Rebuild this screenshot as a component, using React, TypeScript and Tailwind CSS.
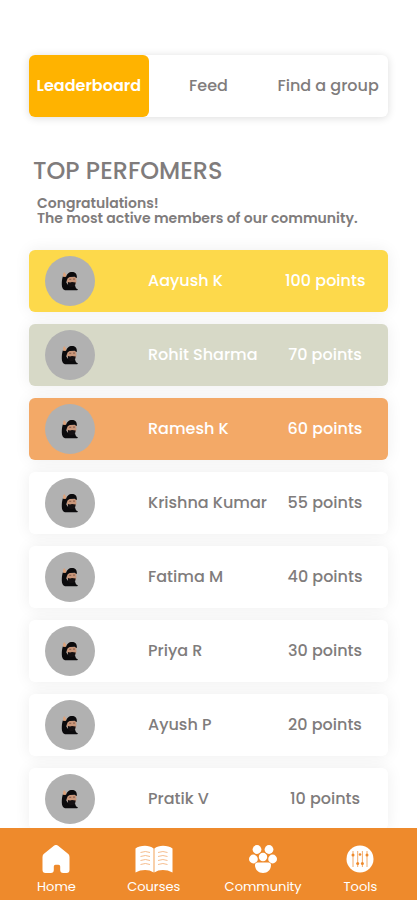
import { useState, type ReactNode } from "react";

type Performer = {
  name: string;
  points: number;
};

const PERFORMERS: Performer[] = [
  { name: "Aayush K", points: 100 },
  { name: "Rohit Sharma", points: 70 },
  { name: "Ramesh K", points: 60 },
  { name: "Krishna Kumar", points: 55 },
  { name: "Fatima M", points: 40 },
  { name: "Priya R", points: 30 },
  { name: "Ayush P", points: 20 },
  { name: "Pratik V", points: 10 },
];

// Gold, silver and bronze, everyone else gets a plain card
const PODIUM_STYLES = [
  "bg-[#fdd94b] text-white",
  "bg-[#d7d9c7] text-white",
  "bg-[#f3a967] text-white",
];

const TABS = ["Leaderboard", "Feed", "Find a group"];

function Avatar() {
  return (
    <span className="flex size-[50px] shrink-0 items-center justify-center rounded-full bg-[#b1b1b1]">
      <svg viewBox="0 0 18 20" className="h-5 w-[18px]" aria-hidden="true">
        {/* body and raised arm */}
        <path d="M1.800 5.500 5 5l1.500 2.500-1.200 4 1.700 2.500 7 .5 1 2.800 2 1.200-.8.800H4C1.800 18.500.8 16.500.8 13.500c0-3 .2-5.500 1-8z" fill="#0b0a0c" />
        <path d="M2.200 2.600 3.300 1l.9 1.400 1.200 1.200-.7 2.400-2.600-.2z" fill="#dba27c" />
        {/* head */}
        <path d="M6.200 6h9l.2 5-1.700 3H8l-2.200-3z" fill="#c8967a" />
        <path d="M5 6.500C5.500 3 8 1 11 1c3 0 5 1.700 4.900 5.500l-.5.600-1.700-1.400-5 .2-2 1.400-.8 2z" fill="#0b0a0c" />
        <path d="M7 11l2 .6 2-.6 3.700.5-.6 3-2 1.500H8.800l-2-2z" fill="#141012" />
        <path d="M8.200 8.300h2M12 8.100h2" stroke="#6b4638" strokeWidth=".7" fill="none" />
      </svg>
    </span>
  );
}

function HomeIcon() {
  return (
    <svg viewBox="0 0 28 28" className="size-7" fill="currentColor" aria-hidden="true">
      <path d="M11.900.8a3.400 3.400 0 0 1 4.200 0l9.900 8a4 4 0 0 1 1.500 3.100V25a3 3 0 0 1-3 3h-3.300a3 3 0 0 1-3-3v-3.500a1.700 1.700 0 0 0-1.700-1.700h-3a1.700 1.700 0 0 0-1.700 1.700V25a3 3 0 0 1-3 3H3.500a3 3 0 0 1-3-3V11.900A4 4 0 0 1 2 8.800z" />
    </svg>
  );
}

function CoursesIcon() {
  return (
    <svg viewBox="0 0 38 28" className="h-7 w-[38px]" fill="currentColor" aria-hidden="true">
      <path d="M.5 3.500C4.500.3 14-.6 18.600 3.500V27.500C14 24.200 6.500 24.200.5 27.500z" />
      <path d="M37.500 3.500C33.500.3 24-.6 19.400 3.500V27.500C24 24.200 31.500 24.200 37.500 27.500z" />
      <g stroke="#f4b681" strokeWidth=".9" fill="none">
        <path d="M5.500 7.500q5-2 9.500 0M5.500 11.500q5-2 9.500 0M5.500 15.500q5-2 9.500 0M5.500 19.500q5-2 9.500 0" />
        <path d="M23 7.500q5-2 9.500 0M23 11.500q5-2 9.500 0M23 15.500q5-2 9.500 0M23 19.500q5-2 9.500 0" />
      </g>
    </svg>
  );
}

function CommunityIcon() {
  return (
    <svg viewBox="0 0 28 28" className="size-7" fill="currentColor" aria-hidden="true">
      <circle cx="8" cy="4.500" r="4.400" />
      <circle cx="20" cy="4.500" r="4.400" />
      <circle cx="4.400" cy="14" r="4.400" />
      <circle cx="23.600" cy="14" r="4.400" />
      <circle cx="14" cy="12" r="4.200" />
      <path d="M8.500 17.500h11c1.600 0 2.500.9 2.500 2.500 0 4.800-3.500 8-8 8s-8-3.200-8-8c0-1.600.9-2.500 2.500-2.500z" />
    </svg>
  );
}

function ToolsIcon() {
  return (
    <svg viewBox="0 0 28 28" className="size-7" aria-hidden="true">
      <circle cx="14" cy="14" r="13.500" fill="currentColor" />
      <path d="M7 6v16M11.700 6v16M16.400 6v16M21 6v16" stroke="#f2a15a" strokeWidth=".9" fill="none" />
      <g fill="#ee8a2c">
        <circle cx="7" cy="10" r="1.500" />
        <circle cx="11.700" cy="18.500" r="1.500" />
        <circle cx="14" cy="9.500" r="1.300" />
        <circle cx="16.400" cy="18.500" r="1.500" />
        <circle cx="21" cy="10" r="1.500" />
      </g>
    </svg>
  );
}

const NAV_ITEMS: { label: string; icon: ReactNode }[] = [
  { label: "Home", icon: <HomeIcon /> },
  { label: "Courses", icon: <CoursesIcon /> },
  { label: "Community", icon: <CommunityIcon /> },
  { label: "Tools", icon: <ToolsIcon /> },
];

export default function App() {
  const [activeTab, setActiveTab] = useState("Leaderboard");

  return (
    <div className="flex h-screen flex-col bg-white font-['Poppins','Inter',sans-serif] text-[#807c7c]">
      <main className="min-h-0 flex-1 overflow-y-auto px-[29px] pt-[55px] [scrollbar-width:none]">
        {/* Tabs */}
        <div className="grid h-[62px] grid-cols-3 rounded-md shadow-[0_1px_8px_rgba(0,0,0,0.14)]">
          {TABS.map(tab => (
            <button
              key={tab}
              type="button"
              onClick={() => setActiveTab(tab)}
              className={`rounded-md text-base whitespace-nowrap ${
                tab === activeTab ? "bg-[#ffb300] font-semibold text-white" : "font-medium"
              }`}
            >
              {tab}
            </button>
          ))}
        </div>

        {/* Heading */}
        <div className="mt-10 px-1">
          <h1 className="text-2xl leading-7 font-medium">TOP PERFOMERS</h1>
          <p className="mt-[11px] px-1 text-sm leading-[15px] font-semibold">
            Congratulations!
            <br />
            The most active members of our community.
          </p>
        </div>

        {/* Ranking */}
        <ol className="mt-6 flex flex-col gap-3">
          {PERFORMERS.map((performer, index) => (
            <li
              key={performer.name}
              className={`flex h-[62px] shrink-0 items-center rounded-md pr-[23px] pl-4 font-medium shadow-[0_0_16px_rgba(0,0,0,0.07)] ${
                PODIUM_STYLES[index] || "bg-white"
              }`}
            >
              <Avatar />
              <span className="ml-[53px] flex-1 whitespace-nowrap">{performer.name}</span>
              <span className="w-20 text-center whitespace-nowrap">{performer.points} points</span>
            </li>
          ))}
        </ol>
      </main>

      {/* Bottom navigation */}
      <nav className="relative grid h-[72px] shrink-0 grid-cols-[3fr_5fr_4fr_4fr] bg-[#ee8a2c] pt-[17px] pr-2 pl-5 text-white">
        {NAV_ITEMS.map(item => (
          <a key={item.label} href="#" className="flex flex-col items-center gap-1 text-[13px] leading-5">
            {item.icon}
            {item.label}
          </a>
        ))}
      </nav>
    </div>
  );
}
